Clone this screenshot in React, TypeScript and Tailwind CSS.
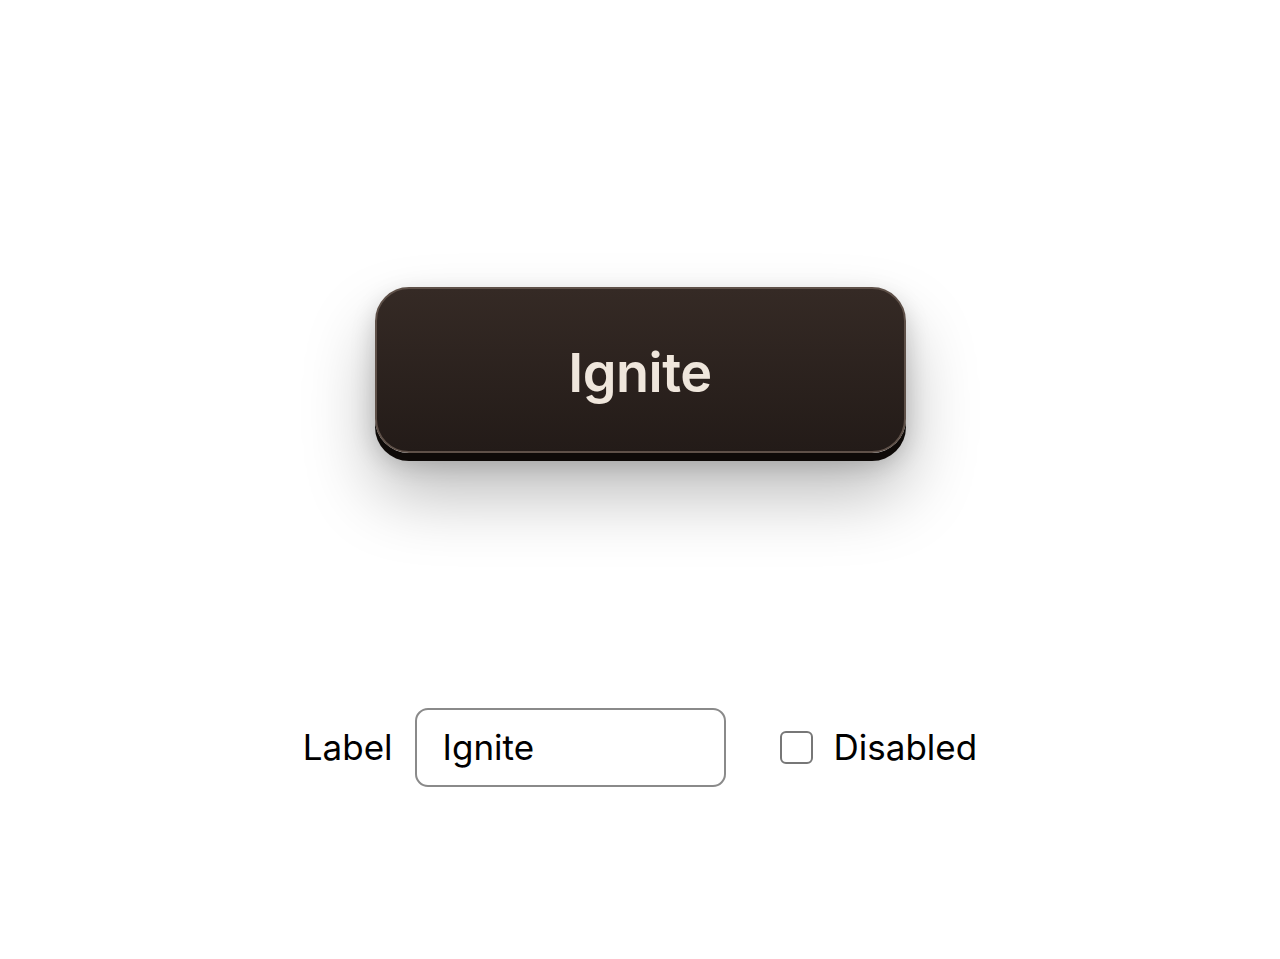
import React from "react";

export default function App() {
  return (
    <div className="flex h-[959px] w-full flex-col items-center bg-white" style={{ fontFamily: "Inter, 'Noto Sans', sans-serif" }}>
      <div className="mt-[287px] flex justify-center">
        <button
          type="button"
          className="flex h-[166px] w-[531px] items-center justify-center rounded-[34px] border-2 border-[#5e5048] bg-gradient-to-b from-[#352a25] to-[#231b18] text-[54px] font-semibold tracking-[-0.5px] text-[#efe6dc] shadow-[0_8px_0_#0e0a08,0_40px_70px_rgba(0,0,0,0.28),0_10px_25px_rgba(0,0,0,0.18)]"
        >
          <span className="mt-[4px]">Ignite</span>
        </button>
      </div>
      <div className="mt-[255px] flex items-center text-[35px] text-black">
        <span className="mr-[22px]">Label</span>
        <div className="flex h-[79px] w-[311px] items-center rounded-[13px] border-2 border-[#8a8a8a] px-[26px]">
          <span>Ignite</span>
        </div>
        <div className="ml-[54px] h-[33px] w-[33px] rounded-[6px] border-2 border-[#777]" />
        <span className="ml-[21px]">Disabled</span>
      </div>
    </div>
  );
}
